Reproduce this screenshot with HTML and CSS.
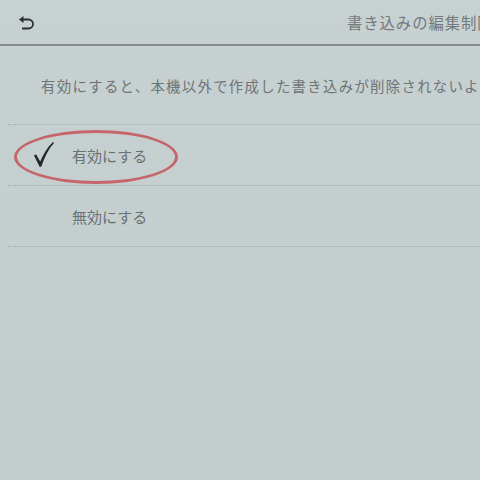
FILE: index.html
```html
<!DOCTYPE html>
<html lang="ja">
<head>
<meta charset="utf-8">
<link rel="stylesheet" href="styles.css">
</head>
<body>
<div class="screen">
  <header class="header">
    <svg class="back" width="18" height="16" viewBox="0 0 18 16">
      <path d="M3 4.5 H10.5 A4.5 4.5 0 0 1 10.5 13.5 H4" fill="none" stroke="#2a2f30" stroke-width="1.8"/>
      <path d="M1 4.5 L5.5 1 L5.5 8 Z" fill="#2a2f30"/>
    </svg>
    <div class="title">書き込みの編集制限</div>
  </header>
  <p class="desc">有効にすると、本機以外で作成した書き込みが削除されないよ</p>
  <ul class="list">
    <li class="row">
      <svg class="check" width="21" height="26" viewBox="0 0 21 26">
        <path d="M0 13.5 L2 12.3 L6.2 19.5 C9.5 12 13.5 5 19 0 L20 1 C14.5 7 10.5 15 7.3 24.8 L5.6 24.8 Z" fill="#22282a"/>
      </svg>
      <span class="label">有効にする</span>
    </li>
    <li class="row">
      <span class="label">無効にする</span>
    </li>
  </ul>
  <div class="circle"></div>
</div>
</body>
</html>
```
FILE: styles.css
```css
html, body {
  margin: 0;
  padding: 0;
}
body {
  width: 480px;
  height: 480px;
  overflow: hidden;
  background: linear-gradient(180deg, #c8d1d2 0%, #c4cecf 60%, #c1cccc 100%);
  font-family: "Noto Sans CJK JP", "Noto Sans", sans-serif;
  color: #6c7374;
}
.screen {
  position: relative;
  height: 480px;
}
.header {
  height: 44px;
  border-bottom: 2px solid #858b8c;
  display: flex;
  align-items: center;
  white-space: nowrap;
  overflow: hidden;
}
.back {
  margin-left: 18px;
  margin-top: 2px;
  flex: none;
}
.title {
  margin-left: 311px;
  font-size: 15.4px;
  letter-spacing: 0.9px;
  color: #737a7b;
  flex: none;
}
.desc {
  margin: 0;
  height: 78px;
  padding-left: 41px;
  box-sizing: border-box;
  padding-top: 30px;
  font-size: 14.4px;
  letter-spacing: 1.3px;
  line-height: 20px;
  white-space: nowrap;
  overflow: hidden;
  color: #6d7475;
}
.list {
  list-style: none;
  margin: 0 0 0 8px;
  padding: 0;
}
.row {
  height: 60px;
  border-top: 1px dotted #a3abac;
  display: flex;
  align-items: center;
  position: relative;
}
.row:last-child {
  border-bottom: 1px dotted #a3abac;
}
.label {
  margin-left: 64px;
  font-size: 15px;
  color: #6a7172;
}
.check {
  position: absolute;
  left: 26px;
  top: 17px;
}
.circle {
  position: absolute;
  left: 14px;
  top: 130px;
  width: 158px;
  height: 48px;
  border: 3px solid #c4666a;
  border-radius: 50%;
}
```
